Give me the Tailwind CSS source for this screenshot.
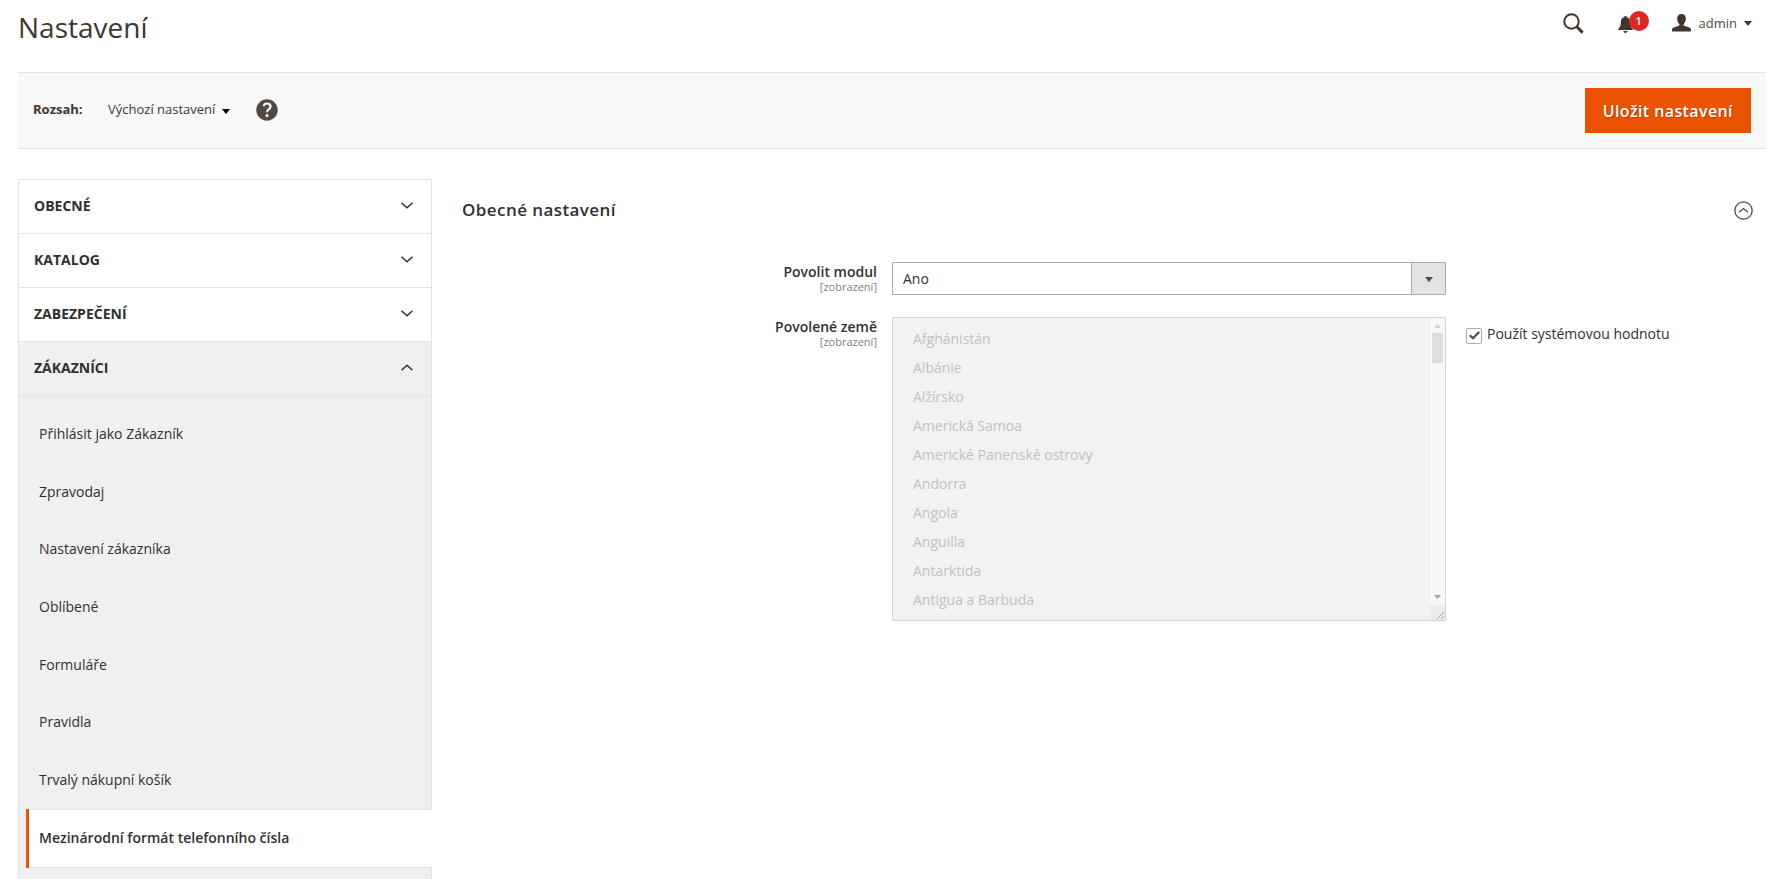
<!DOCTYPE html>
<html lang="cs">
<head>
<meta charset="utf-8">
<meta name="viewport" content="width=device-width, initial-scale=1">
<title>Nastavení</title>
<script src="https://cdn.jsdelivr.net/npm/@tailwindcss/browser@4"></script>
</head>
<body class="flex min-h-screen flex-col bg-white pr-[5px] pl-[18px] font-['Open_Sans','Noto_Sans',sans-serif] text-sm text-[#303030]">

<header class="flex h-[72px] items-start justify-between pr-[14px]">
  <h1 class="pt-2 text-[28px] leading-[38px] text-[#41362f]">Nastavení</h1>
  <div class="flex h-[45px] items-center text-[#41362f]">
    <button type="button" aria-label="Hledat" class="mt-[2px] mr-[34px]">
      <svg class="size-[21px]" viewBox="0 0 21 21" fill="none" stroke="currentColor" aria-hidden="true"><circle cx="8.500" cy="8.500" r="7.200" stroke-width="2"/><path d="M13.800 13.800 19.600 19.600" stroke-width="3"/></svg>
    </button>
    <button type="button" aria-label="Oznámení: 1" class="relative mt-[3px] mr-[39px]">
      <svg class="h-[17px] w-[15px]" viewBox="0 0 15 17" fill="currentColor" aria-hidden="true"><path d="M7.500 0c.8 0 1.200.5 1.200 1.100 2.200.6 3.300 2.300 3.400 4.700.1 3.400.7 5.300 2.900 7.600v.6H0v-.6c2.200-2.300 2.800-4.200 2.900-7.600.1-2.400 1.200-4.100 3.400-4.700C6.300.5 6.700 0 7.500 0ZM5.300 15h4.400c-.3 1.200-1.100 1.900-2.200 1.900S5.600 16.200 5.300 15Z"/></svg>
      <span class="absolute -top-[5px] left-[11px] flex size-5 items-center justify-center rounded-full bg-[#e22626] text-[11px] leading-5 font-semibold text-white">1</span>
    </button>
    <button type="button" class="flex items-center">
      <svg class="mr-2 h-[18px] w-[19px]" viewBox="0 0 19 18" fill="currentColor" aria-hidden="true"><path d="M9.500 0c2.700 0 4.400 1.900 4.400 4.500 0 2.200-1 4.400-2.200 5.700-.3.900.1 1.600 1.100 1.900l4 1.200c1.500.5 2.200 1.300 2.200 2.700v1.500H0V16c0-1.400.7-2.200 2.200-2.700l4-1.200c1-.3 1.400-1 1.100-1.900C6.100 8.900 5.100 6.700 5.100 4.500 5.100 1.900 6.800 0 9.500 0Z"/></svg>
      <span class="text-[13px] leading-[18px] text-[#514943]">admin</span>
      <svg class="mt-[2px] ml-[7px] h-[5px] w-2" viewBox="0 0 8 5" fill="currentColor" aria-hidden="true"><path d="M0 0h8L4 5Z"/></svg>
    </button>
  </div>
</header>

<div class="flex h-[77px] items-center justify-between border-y border-[#e3e3e3] bg-[#f8f8f8] px-[15px] text-[13px] text-[#41362f]">
  <div class="flex items-center pb-[2px]">
    <span id="scope" class="w-[75px] font-bold">Rozsah:</span>
    <button type="button" aria-describedby="scope" class="flex items-center">Výchozí nastavení
      <svg class="mt-[3px] ml-[7px] h-[5px] w-2 text-black" viewBox="0 0 8 5" fill="currentColor" aria-hidden="true"><path d="M0 0h8L4 5Z"/></svg>
    </button>
    <a href="#" aria-label="Nápověda" class="ml-[26px]">
      <svg class="size-[22px]" viewBox="0 0 22 22" fill="none" aria-hidden="true"><circle cx="11" cy="11" r="10.700" fill="#514943"/><path d="M7.600 7.100C8 5.400 9.200 4.500 11 4.500c2.100 0 3.500 1.100 3.500 2.900 0 1.400-.8 2.200-1.900 3-1.100.8-1.500 1.400-1.500 2.800" stroke="#fff" stroke-width="2.200"/><circle cx="11" cy="16.400" r="1.500" fill="#fff"/></svg>
    </a>
  </div>
  <button type="button" class="h-[45px] bg-[#eb5202] px-[18px] text-base font-semibold tracking-wide text-white [text-shadow:1px_1px_0_rgba(0,0,0,0.25)]">Uložit nastavení</button>
</div>

<div class="flex grow pt-[30px]">
  <nav class="flex w-[414px] shrink-0 flex-col text-sm" aria-label="Sekce nastavení">
    <div class="border-x border-t border-[#e3e3e3] font-bold uppercase">
      <button type="button" aria-expanded="false" class="flex h-[54px] w-full items-center justify-between border-b border-[#e3e3e3] pr-[18px] pb-[2px] pl-[15px] text-left uppercase"><span>Obecné</span><svg class="h-[7px] w-3" viewBox="0 0 12 7" fill="none" stroke="currentColor" stroke-width="1.500" aria-hidden="true"><path d="m.5.7 5.500 5 5.500-5"/></svg></button>
      <button type="button" aria-expanded="false" class="flex h-[54px] w-full items-center justify-between border-b border-[#e3e3e3] pr-[18px] pb-[2px] pl-[15px] text-left uppercase"><span>Katalog</span><svg class="h-[7px] w-3" viewBox="0 0 12 7" fill="none" stroke="currentColor" stroke-width="1.500" aria-hidden="true"><path d="m.5.7 5.500 5 5.500-5"/></svg></button>
      <button type="button" aria-expanded="false" class="flex h-[54px] w-full items-center justify-between border-b border-[#e3e3e3] pr-[18px] pb-[2px] pl-[15px] text-left uppercase"><span>Zabezpečení</span><svg class="h-[7px] w-3" viewBox="0 0 12 7" fill="none" stroke="currentColor" stroke-width="1.500" aria-hidden="true"><path d="m.5.7 5.500 5 5.500-5"/></svg></button>
      <button type="button" aria-expanded="true" class="flex h-[54px] w-full items-center justify-between border-b border-[#e3e3e3] bg-[#f0f0f0] pr-[18px] pb-[2px] pl-[15px] text-left uppercase"><span>Zákazníci</span><svg class="h-[7px] w-3" viewBox="0 0 12 7" fill="none" stroke="currentColor" stroke-width="1.500" aria-hidden="true"><path d="m.5 6.300 5.500-5 5.500 5"/></svg></button>
    </div>
    <div class="flex grow flex-col border-l border-[#e3e3e3] bg-[#f0f0f0]">
      <ul class="grid h-[413px] auto-rows-fr border-r border-[#e3e3e3] pt-[9px]">
        <li class="flex"><a href="#" class="flex grow items-center pl-5">Přihlásit jako Zákazník</a></li>
        <li class="flex"><a href="#" class="flex grow items-center pl-5">Zpravodaj</a></li>
        <li class="flex"><a href="#" class="flex grow items-center pl-5">Nastavení zákazníka</a></li>
        <li class="flex"><a href="#" class="flex grow items-center pl-5">Oblíbené</a></li>
        <li class="flex"><a href="#" class="flex grow items-center pl-5">Formuláře</a></li>
        <li class="flex"><a href="#" class="flex grow items-center pl-5">Pravidla</a></li>
        <li class="flex"><a href="#" class="flex grow items-center pl-5">Trvalý nákupní košík</a></li>
      </ul>
      <div class="ml-[7px] flex bg-white">
        <span class="w-[3px] bg-[#eb5202]"></span>
        <a href="#" aria-current="page" class="flex h-[59px] grow items-center border-y border-[#e3e3e3] pb-[2px] pl-[10px] font-semibold">Mezinárodní formát telefonního čísla</a>
      </div>
      <div class="grow border-r border-[#e3e3e3]"></div>
    </div>
  </nav>

  <main class="min-w-0 grow pr-[15px] pl-[30px]">
    <div class="flex h-[83px] items-start justify-between pt-[19px]">
      <h2 class="text-[17px] leading-6 font-semibold tracking-wide">Obecné nastavení</h2>
      <button type="button" aria-label="Sbalit" class="-mr-[2px] mt-[3px]">
        <svg class="size-[19px]" viewBox="0 0 19 19" fill="none" stroke="#514943" aria-hidden="true"><circle cx="9.500" cy="9.500" r="8.700" stroke-width="1.300"/><path d="m5 11.300 4.500-3.800 4.500 3.800" stroke-width="1.300"/></svg>
      </button>
    </div>

    <div class="grid grid-cols-[430fr_554fr_305fr] gap-y-[22px]">
      <label for="enable" class="flex flex-col pr-[15px] text-right">
        <span class="leading-5 font-semibold">Povolit modul</span>
        <span class="text-[11px] leading-[9px] text-[#808080]">[zobrazení]</span>
      </label>
      <div class="relative">
        <select id="enable" class="block h-[33px] w-full appearance-none rounded-[1px] border border-[#adadad] bg-white pr-11 pl-[10px] text-sm">
          <option>Ano</option>
        </select>
        <span class="pointer-events-none absolute inset-y-0 right-0 flex w-[35px] items-center justify-center rounded-r-[1px] border border-[#adadad] bg-[#e3e3e3]">
          <svg class="mt-px h-[5px] w-2" viewBox="0 0 8 5" fill="#514943" aria-hidden="true"><path d="M0 0h8L4 5Z"/></svg>
        </span>
      </div>
      <span></span>

      <label for="countries" class="flex flex-col pr-[15px] text-right">
        <span class="leading-5 font-semibold">Povolené země</span>
        <span class="text-[11px] leading-[9px] text-[#808080]">[zobrazení]</span>
      </label>
      <div class="relative">
        <select id="countries" multiple disabled size="10" class="block h-[304px] w-full appearance-none overflow-hidden rounded-[1px] border border-[#d3d3d3] bg-[#f2f2f2] px-[10px] pt-[6px] text-sm opacity-100 [scrollbar-width:none]">
          <option class="h-[29px] px-[10px] py-[5px] leading-[19px] text-[#c1c1c1]">Afghánistán</option>
          <option class="h-[29px] px-[10px] py-[5px] leading-[19px] text-[#c1c1c1]">Albánie</option>
          <option class="h-[29px] px-[10px] py-[5px] leading-[19px] text-[#c1c1c1]">Alžírsko</option>
          <option class="h-[29px] px-[10px] py-[5px] leading-[19px] text-[#c1c1c1]">Americká Samoa</option>
          <option class="h-[29px] px-[10px] py-[5px] leading-[19px] text-[#c1c1c1]">Americké Panenské ostrovy</option>
          <option class="h-[29px] px-[10px] py-[5px] leading-[19px] text-[#c1c1c1]">Andorra</option>
          <option class="h-[29px] px-[10px] py-[5px] leading-[19px] text-[#c1c1c1]">Angola</option>
          <option class="h-[29px] px-[10px] py-[5px] leading-[19px] text-[#c1c1c1]">Anguilla</option>
          <option class="h-[29px] px-[10px] py-[5px] leading-[19px] text-[#c1c1c1]">Antarktida</option>
          <option class="h-[29px] px-[10px] py-[5px] leading-[19px] text-[#c1c1c1]">Antigua a Barbuda</option>
        </select>
        <div class="absolute inset-y-px right-px flex w-[15px] flex-col items-center bg-[#f7f7f7]" aria-hidden="true">
          <svg class="mt-[6px] h-1 w-[7px]" viewBox="0 0 7 4" fill="#d0d0d0"><path d="M0 4h7L3.500 0Z"/></svg>
          <span class="mt-[5px] h-[30px] w-[11px] bg-[#dedede]"></span>
          <svg class="mt-auto mb-[6px] h-1 w-[7px]" viewBox="0 0 7 4" fill="#a3a3a3"><path d="M0 0h7L3.500 4Z"/></svg>
          <svg class="size-[15px] bg-[#ececec]" viewBox="0 0 15 15" fill="none" stroke="#a3a3a3"><path d="m7 14 7-7M11 14l3-3"/></svg>
        </div>
      </div>
      <div class="flex items-start gap-[5px] pt-[7px] pl-5">
        <span class="relative mt-[4px] size-4 shrink-0">
          <input id="inherit" type="checkbox" checked class="block size-4 appearance-none rounded-[2px] border border-[#adadad] bg-white">
          <svg class="pointer-events-none absolute top-[3px] left-[3px] h-[9px] w-[11px]" viewBox="0 0 11 9" fill="none" stroke="#514943" stroke-width="2.200" aria-hidden="true"><path d="m.8 4.200 3.200 3.100L10.200 1"/></svg>
        </span>
        <label for="inherit" class="leading-5">Použít systémovou hodnotu</label>
      </div>
    </div>
  </main>
</div>
</body>
</html>
